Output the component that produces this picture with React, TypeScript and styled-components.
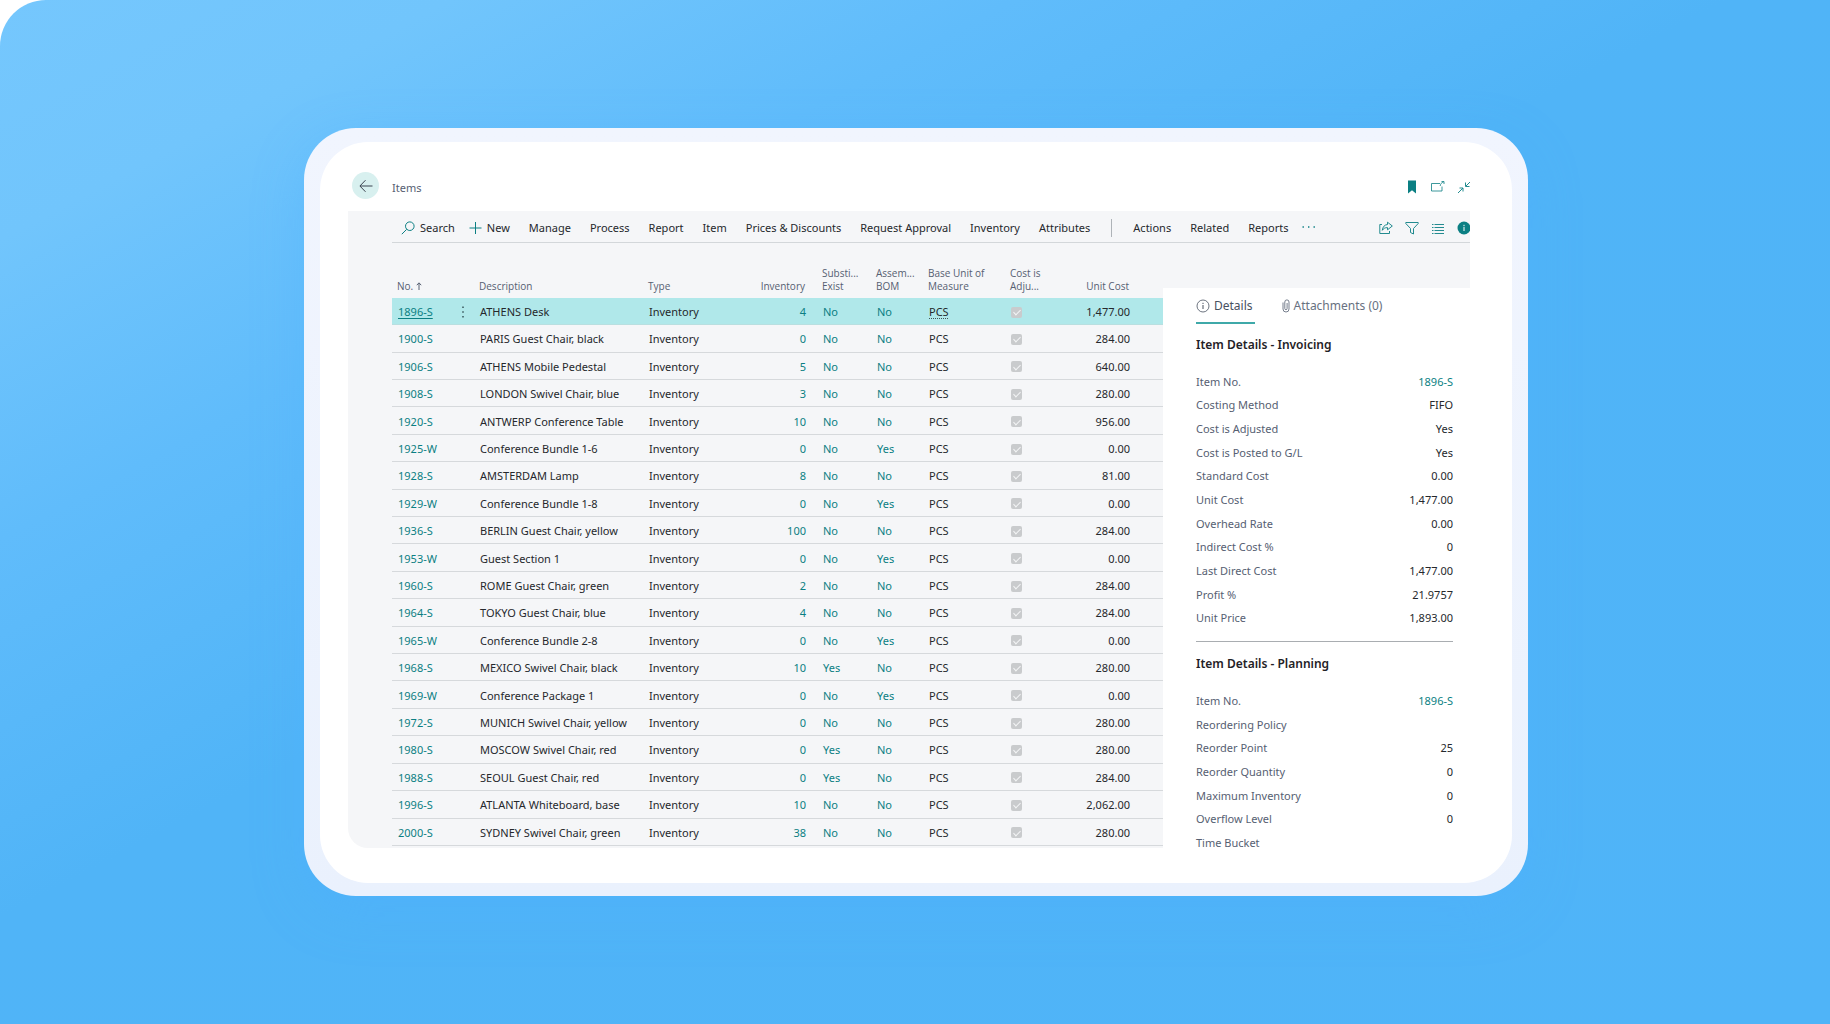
import React from "react";
import styled, { createGlobalStyle } from "styled-components";

const teal = "#0b7f83";
const ink = "#25282c";
const muted = "#566072";

const GlobalStyle = createGlobalStyle`
  * { box-sizing: border-box; }
  body { margin: 0; background: #fff; }
  button { font: inherit; color: inherit; background: none; border: 0; padding: 0; cursor: pointer; }
`;

const Page = styled.main`
  min-height: 100vh;
  padding: 128px 15px 128px 17px;
  border-top-left-radius: 46px;
  background: linear-gradient(152deg, #75c7fd 0%, #71c5fc 12%, #60bcfb 27%, #50b4f7 46%, #4fb4f8 100%);
  font-family: "Noto Sans", "Open Sans", sans-serif;
  font-size: 11px;
  line-height: 16px;
  color: ${ink};
`;

const Frame = styled.div`
  max-width: 1224px;
  margin: 0 auto;
  padding: 14px 16px 13px;
  border-radius: 52px;
  background: linear-gradient(180deg, #f1f5fe, #eaf1fd);
  box-shadow: 0 16px 50px rgba(76, 174, 255, 0.35);
`;

const Screen = styled.div`
  padding: 0 42px 35px 28px;
  border-radius: 48px;
  background: #fff;
`;

const TitleBar = styled.header`
  display: flex;
  align-items: center;
  height: 69px;
  padding: 20px 0 0 4px;
`;

const BackButton = styled.button`
  display: grid;
  place-items: center;
  width: 27px;
  height: 27px;
  margin: 0 13px 2px 0;
  border-radius: 50%;
  background: #d8f0ef;
  color: #3b4450;
`;

const PageTitle = styled.h1`
  flex: 1;
  margin: 0;
  padding-top: 2px;
  font-size: 11px;
  font-weight: 400;
  color: ${muted};
`;

const IconGroup = styled.div`
  display: flex;
  align-items: center;
  gap: 12px;
  margin-left: auto;
  margin-right: -1px;
  color: ${teal};
`;

const IconButton = styled.button`
  display: grid;
  place-items: center;
  width: 14px;
  height: 16px;
`;

const Workspace = styled.section`
  padding-left: 44px;
  border-bottom-left-radius: 20px;
  background: #f5f6f8;
`;

const Toolbar = styled.nav`
  display: flex;
  align-items: center;
  gap: 19px;
  height: 32px;
  padding: 2px 0 0 9px;
  overflow: hidden;
  border-bottom: 1px solid #d3d7da;
`;

const ToolGroup = styled.div`
  display: flex;
  gap: 14px;
`;

const ToolButton = styled.button`
  display: flex;
  align-items: center;
  gap: 5px;
  white-space: nowrap;
  svg { color: ${teal}; }
`;

const Separator = styled.span`
  width: 1px;
  height: 18px;
  margin: 0 2px;
  background: #aeb3b8;
`;

const Content = styled.div`
  display: grid;
  grid-template-columns: minmax(0, 1fr) 307px;
`;

const ItemTable = styled.table`
  width: 100%;
  height: 603px;
  margin-bottom: 2px;
  border-collapse: collapse;
  table-layout: fixed;
`;

const Col = styled.col<{ $w: number }>`
  width: ${(p) => p.$w}px;
`;

const Head = styled.th<{ $end?: number }>`
  height: 55px;
  padding: 0 ${(p) => p.$end ?? 0}px 5px 5px;
  text-align: ${(p) => (p.$end ? "right" : "left")};
  vertical-align: bottom;
  font-family: "Open Sans", "Noto Sans", sans-serif;
  font-size: 10px;
  line-height: 13px;
  font-weight: 400;
  color: ${muted};
  white-space: pre-line;
`;

const Row = styled.tr<{ $selected?: boolean }>`
  background: ${(p) => (p.$selected ? "#b0e8ea" : "transparent")};
  border-bottom: 1px solid ${(p) => (p.$selected ? "#b9dfe0" : "#d6d9dc")};
`;

const Cell = styled.td<{ $end?: number; $teal?: boolean }>`
  padding: 2px ${(p) => p.$end ?? 0}px 0 6px;
  text-align: ${(p) => (p.$end ? "right" : "left")};
  color: ${(p) => (p.$teal ? teal : ink)};
  white-space: nowrap;
`;

const NoCell = styled.div`
  display: flex;
  align-items: center;
  justify-content: space-between;
  padding-right: 9px;
`;

const ItemLink = styled.a<{ $selected?: boolean }>`
  color: ${teal};
  text-decoration: ${(p) => (p.$selected ? "underline" : "none")};
  text-underline-offset: 2px;
`;

const Unit = styled.span<{ $selected?: boolean }>`
  text-decoration: ${(p) => (p.$selected ? "underline dotted #3f5558" : "none")};
  text-underline-offset: 2px;
`;

const Check = styled.input`
  appearance: none;
  display: grid;
  place-items: center;
  width: 11px;
  height: 11px;
  margin: 0;
  border-radius: 2px;
  background: #c9cbcd;
  &::after {
    content: "";
    width: 3px;
    height: 6px;
    margin-bottom: 1px;
    border: solid #f4f5f6;
    border-width: 0 1px 1px 0;
    transform: rotate(45deg);
  }
`;

const Panel = styled.aside`
  contain: size;
  overflow: hidden;
  margin-top: 45px;
  padding: 0 17px 0 33px;
  background: #fff;
`;

const Tabs = styled.div`
  display: flex;
  gap: 27px;
`;

const Tab = styled.button<{ $active?: boolean }>`
  display: flex;
  align-items: center;
  gap: 4px;
  height: 36px;
  padding: 2px 2px 0 0;
  border-bottom: 2px solid ${(p) => (p.$active ? "#3fa9a9" : "transparent")};
  font-size: 12px;
  color: ${(p) => (p.$active ? "#48515f" : "#687181")};
`;

const PanelTitle = styled.h2`
  margin: 11px 0 15px;
  font-size: 12px;
  line-height: 20px;
  font-weight: 600;
  color: #1f2226;
`;

const Facts = styled.dl<{ $height: number }>`
  display: grid;
  grid-auto-rows: 1fr;
  height: ${(p) => p.$height}px;
  margin: 0;
`;

const Fact = styled.div`
  display: flex;
  align-items: center;
  justify-content: space-between;
`;

const Term = styled.dt`
  color: ${muted};
`;

const Value = styled.dd`
  margin: 0;
`;

const Divider = styled.hr`
  height: 1px;
  margin: 11px 0 12px;
  border: 0;
  background: #a9adb1;
`;

type Item = [string, string, number, string, string, string];

const items: Item[] = [
  ["1896-S", "ATHENS Desk", 4, "No", "No", "1,477.00"],
  ["1900-S", "PARIS Guest Chair, black", 0, "No", "No", "284.00"],
  ["1906-S", "ATHENS Mobile Pedestal", 5, "No", "No", "640.00"],
  ["1908-S", "LONDON Swivel Chair, blue", 3, "No", "No", "280.00"],
  ["1920-S", "ANTWERP Conference Table", 10, "No", "No", "956.00"],
  ["1925-W", "Conference Bundle 1-6", 0, "No", "Yes", "0.00"],
  ["1928-S", "AMSTERDAM Lamp", 8, "No", "No", "81.00"],
  ["1929-W", "Conference Bundle 1-8", 0, "No", "Yes", "0.00"],
  ["1936-S", "BERLIN Guest Chair, yellow", 100, "No", "No", "284.00"],
  ["1953-W", "Guest Section 1", 0, "No", "Yes", "0.00"],
  ["1960-S", "ROME Guest Chair, green", 2, "No", "No", "284.00"],
  ["1964-S", "TOKYO Guest Chair, blue", 4, "No", "No", "284.00"],
  ["1965-W", "Conference Bundle 2-8", 0, "No", "Yes", "0.00"],
  ["1968-S", "MEXICO Swivel Chair, black", 10, "Yes", "No", "280.00"],
  ["1969-W", "Conference Package 1", 0, "No", "Yes", "0.00"],
  ["1972-S", "MUNICH Swivel Chair, yellow", 0, "No", "No", "280.00"],
  ["1980-S", "MOSCOW Swivel Chair, red", 0, "Yes", "No", "280.00"],
  ["1988-S", "SEOUL Guest Chair, red", 0, "Yes", "No", "284.00"],
  ["1996-S", "ATLANTA Whiteboard, base", 10, "No", "No", "2,062.00"],
  ["2000-S", "SYDNEY Swivel Chair, green", 38, "No", "No", "280.00"],
];

const invoicing: [string, string][] = [
  ["Item No.", "1896-S"],
  ["Costing Method", "FIFO"],
  ["Cost is Adjusted", "Yes"],
  ["Cost is Posted to G/L", "Yes"],
  ["Standard Cost", "0.00"],
  ["Unit Cost", "1,477.00"],
  ["Overhead Rate", "0.00"],
  ["Indirect Cost %", "0"],
  ["Last Direct Cost", "1,477.00"],
  ["Profit %", "21.9757"],
  ["Unit Price", "1,893.00"],
];

const planning: [string, string][] = [
  ["Item No.", "1896-S"],
  ["Reordering Policy", ""],
  ["Reorder Point", "25"],
  ["Reorder Quantity", "0"],
  ["Maximum Inventory", "0"],
  ["Overflow Level", "0"],
  ["Time Bucket", ""],
];

const columns = [82, 169, 102, 72, 54, 52, 82, 70, 88];
const menus = ["Manage", "Process", "Report", "Item", "Prices & Discounts", "Request Approval", "Inventory", "Attributes"];

const Svg = ({ w = 14, h = 14, children }: { w?: number; h?: number; children: React.ReactNode }) => (
  <svg width={w} height={h} viewBox={`0 0 ${w} ${h}`} fill="none" stroke="currentColor" strokeWidth="1" aria-hidden="true">
    {children}
  </svg>
);

const FactList = ({ rows, height }: { rows: [string, string][]; height: number }) => (
  <Facts $height={height}>
    {rows.map(([term, value]) => (
      <Fact key={term}>
        <Term>{term}</Term>
        <Value>{term === "Item No." ? <ItemLink href="#item">{value}</ItemLink> : value}</Value>
      </Fact>
    ))}
  </Facts>
);

export default function App() {
  return (
    <>
      <GlobalStyle />
      <Page>
        <Frame>
          <Screen>
            <TitleBar>
              <BackButton aria-label="Back">
                <Svg w={14} h={14}>
                  <path d="M13.5 7H1M6.5 1.2L.9 7l5.6 5.8" />
                </Svg>
              </BackButton>
              <PageTitle>Items</PageTitle>
              <IconGroup>
                <IconButton aria-label="Bookmark">
                  <Svg>
                    <path d="M3 .5h8v13L7 10.300 3 13.500z" fill="currentColor" stroke="none" />
                  </Svg>
                </IconButton>
                <IconButton aria-label="Open in new window">
                  <Svg>
                    <path d="M9 3.500H.500v7.500h10.500V6.500" strokeWidth=".8" />
                    <path d="M9.200 6c.2-2 1.200-3.500 3.300-4M10.500 1.500h2.500v2.500" strokeWidth=".8" />
                  </Svg>
                </IconButton>
                <IconButton aria-label="Collapse">
                  <Svg>
                    <path d="M1 13l4.800-4.800M2.500 8h3.500v3.500M13 2L9 6M8.500 2.500v4h4" strokeWidth=".9" />
                  </Svg>
                </IconButton>
              </IconGroup>
            </TitleBar>

            <Workspace>
              <Toolbar aria-label="Actions">
                <ToolGroup>
                  <ToolButton>
                    <Svg>
                      <circle cx="8.8" cy="5.2" r="4.3" />
                      <path d="M5.7 8.3L.8 13.2" />
                    </Svg>
                    Search
                  </ToolButton>
                  <ToolButton>
                    <Svg w={13}>
                      <path d="M6.5 1v12M.5 7h12" />
                    </Svg>
                    New
                  </ToolButton>
                </ToolGroup>
                {menus.map((m) => (
                  <ToolButton key={m}>{m}</ToolButton>
                ))}
                <Separator />
                <ToolButton>Actions</ToolButton>
                <ToolButton>Related</ToolButton>
                <ToolGroup>
                  <ToolButton>Reports</ToolButton>
                  <ToolButton aria-label="More">
                    <Svg>
                      <path d="M.5 6h1.400M6 6h1.400M11.500 6h1.400" strokeWidth="1.400" />
                    </Svg>
                  </ToolButton>
                </ToolGroup>
                <IconGroup>
                  <IconButton aria-label="Share">
                    <Svg>
                      <path d="M3 3.500H.800v9h9.700V10" strokeWidth=".9" />
                      <path d="M8.500 1.200l4.800 3.800-4.800 3.800V6.600C6 6.600 4.500 7.400 3.300 9.300 3.600 6 5.500 3.800 8.500 3.500z" strokeWidth=".9" />
                    </Svg>
                  </IconButton>
                  <IconButton aria-label="Filter">
                    <Svg>
                      <path d="M.800 1.500h12.400v1L8.500 7.500v5.500l-3-1.500v-4L.800 2.500z" strokeWidth=".9" />
                    </Svg>
                  </IconButton>
                  <IconButton aria-label="List view">
                    <Svg>
                      <path d="M1 3.500h1.500M3.500 3.500H13M1 6.500h1.500M3.500 6.500H13M1 9.500h1.500M3.500 9.500H13M1 12.500h1.500M3.500 12.500H13" strokeWidth=".9" />
                    </Svg>
                  </IconButton>
                  <IconButton aria-label="Toggle details">
                    <Svg>
                      <circle cx="7" cy="7" r="6.500" fill="currentColor" stroke="none" />
                      <path d="M7 5.800V10M7 3.800v1.200" stroke="#fff" />
                    </Svg>
                  </IconButton>
                </IconGroup>
              </Toolbar>

              <Content>
                <ItemTable>
                  <colgroup>
                    {columns.map((w, i) => (
                      <Col key={i} $w={w} />
                    ))}
                  </colgroup>
                  <thead>
                    <tr>
                      <Head aria-sort="ascending">
                        No.{" "}
                        <Svg w={6} h={8}>
                          <path d="M3 8V1M.800 3.200L3 .800l2.200 2.400" />
                        </Svg>
                      </Head>
                      <Head>Description</Head>
                      <Head>Type</Head>
                      <Head $end={12}>Inventory</Head>
                      <Head>{"Substi...\nExist"}</Head>
                      <Head>{"Assem...\nBOM"}</Head>
                      <Head>{"Base Unit of\nMeasure"}</Head>
                      <Head>{"Cost is\nAdju..."}</Head>
                      <Head $end={34}>Unit Cost</Head>
                    </tr>
                  </thead>
                  <tbody>
                    {items.map(([no, description, stock, substitutes, assembly, cost], i) => (
                      <Row key={no} $selected={i === 0}>
                        <Cell>
                          <NoCell>
                            <ItemLink href="#item" $selected={i === 0}>{no}</ItemLink>
                            {i === 0 && (
                              <Svg w={4} h={12}>
                                <path d="M2 .5V2M2 5.200v1.500M2 10v1.500" stroke="#2f4a50" strokeWidth="1.400" />
                              </Svg>
                            )}
                          </NoCell>
                        </Cell>
                        <Cell>{description}</Cell>
                        <Cell>Inventory</Cell>
                        <Cell $end={11} $teal>{stock}</Cell>
                        <Cell $teal>{substitutes}</Cell>
                        <Cell $teal>{assembly}</Cell>
                        <Cell><Unit $selected={i === 0}>PCS</Unit></Cell>
                        <Cell><Check type="checkbox" defaultChecked disabled aria-label={`Cost is adjusted, ${no}`} /></Cell>
                        <Cell $end={33}>{cost}</Cell>
                      </Row>
                    ))}
                  </tbody>
                </ItemTable>

                <Panel>
                  <Tabs>
                    <Tab $active>
                      <Svg>
                        <circle cx="7" cy="7" r="6" strokeWidth=".8" />
                        <path d="M7 6v4M7 3.800v1.200" />
                      </Svg>
                      Details
                    </Tab>
                    <Tab>
                      <Svg w={8}>
                        <path d="M1 3.500v6.500a3 3 0 0 0 6 0V3a2 2 0 0 0-4.200 0v6.500a1.100 1.100 0 0 0 2.300 0V4" strokeWidth=".9" />
                      </Svg>
                      Attachments (0)
                    </Tab>
                  </Tabs>
                  <PanelTitle>Item Details - Invoicing</PanelTitle>
                  <FactList rows={invoicing} height={260} />
                  <Divider />
                  <PanelTitle>Item Details - Planning</PanelTitle>
                  <FactList rows={planning} height={166} />
                </Panel>
              </Content>
            </Workspace>
          </Screen>
        </Frame>
      </Page>
    </>
  );
}
